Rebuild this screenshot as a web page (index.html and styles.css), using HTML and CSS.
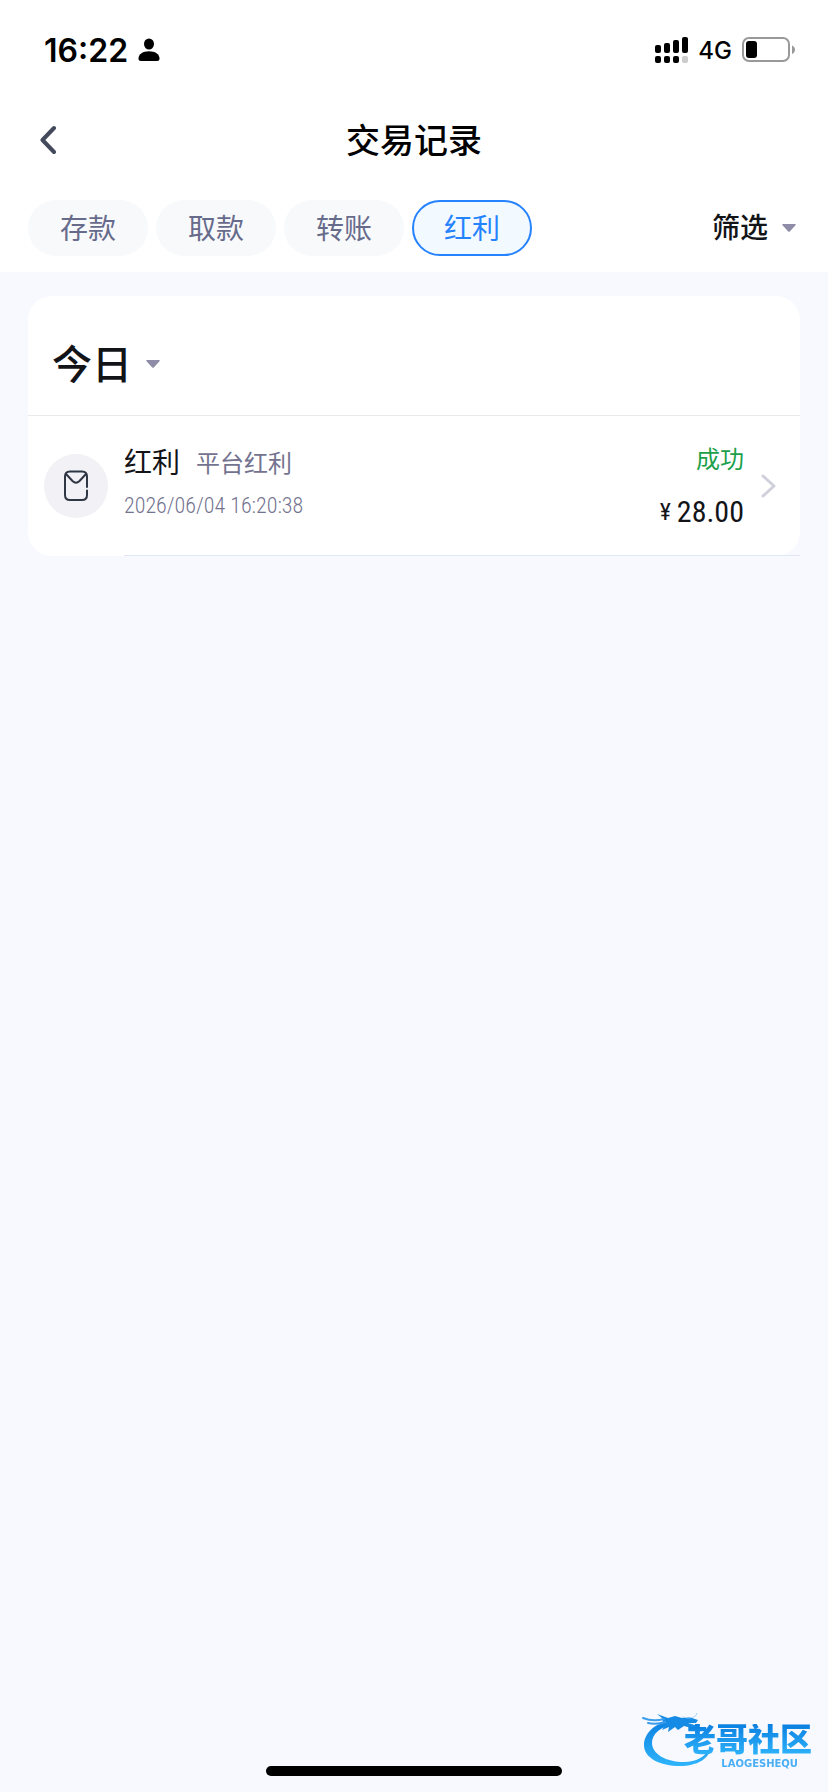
FILE: index.html
```html
<!DOCTYPE html>
<html lang="zh-CN">
<head>
    <meta charset="UTF-8">
    <meta name="viewport" content="width=device-width, initial-scale=1.0">
    <title>交易记录</title>
    <link rel="stylesheet" href="styles.css">
</head>
<body>
    <header class="top">
        <!-- Status bar -->
        <div class="status-bar">
            <div class="status-left">
                <span class="clock">16:22</span>
                <svg class="person" width="22" height="24" viewBox="0 0 22 24">
                    <ellipse cx="11" cy="6" rx="5" ry="5.5"/>
                    <path d="M0.5 20.5C0.5 16 5 13.2 11 13.2S21.5 16 21.5 20.5C21.5 22.2 20.7 23 19 23H3C1.3 23 .5 22.2 .5 20.5Z"/>
                </svg>
            </div>
            <div class="status-right">
                <svg width="33" height="28" viewBox="0 0 33 28">
                    <rect x="0" y="9" width="6" height="8" rx="2"/>
                    <rect x="9" y="7" width="6" height="10" rx="2"/>
                    <rect x="18" y="4" width="6" height="13" rx="2"/>
                    <rect x="27" y="1" width="6" height="16" rx="2"/>
                    <rect x="0" y="20" width="6" height="7" rx="2"/>
                    <rect x="9" y="20" width="6" height="7" rx="2"/>
                    <rect x="18" y="20" width="6" height="7" rx="2"/>
                    <rect x="27" y="20" width="6" height="7" rx="2" fill="#ccc"/>
                </svg>
                <span class="network">4G</span>
                <svg width="54" height="26" viewBox="0 0 54 26">
                    <rect x="1" y="1" width="46" height="23" rx="6" fill="none" stroke="#999" stroke-width="2"/>
                    <rect x="4" y="4" width="11" height="17" rx="3"/>
                    <path d="M50 8.500C54 10 54 15.500 50 17Z" fill="#999"/>
                </svg>
            </div>
        </div>

        <!-- Title bar -->
        <div class="title-bar">
            <button class="back" type="button" aria-label="返回">
                <svg width="18" height="30" viewBox="0 0 18 30">
                    <path d="M14 3L2.500 15L14 27" fill="none" stroke="#434a5c" stroke-width="4" stroke-linecap="round" stroke-linejoin="round"/>
                </svg>
            </button>
            <h1>交易记录</h1>
        </div>

        <!-- Record type tabs -->
        <nav class="tabs">
            <button class="tab" type="button">存款</button>
            <button class="tab" type="button">取款</button>
            <button class="tab" type="button">转账</button>
            <button class="tab active" type="button">红利</button>
            <button class="filter" type="button">
                <span class="label">筛选</span>
                <svg class="caret" width="14" height="8" viewBox="0 0 14 8"><path d="M1 0H13Q14.500 0 13.500 1.200L8 7.200Q7 8.400 6 7.200L.5 1.200Q-.5 0 1 0Z"/></svg>
            </button>
        </nav>
    </header>

    <main>
        <section class="card">
            <button class="day" type="button">
                <span class="label">今日</span>
                <svg class="caret" width="14" height="8" viewBox="0 0 14 8"><path d="M1 0H13Q14.500 0 13.500 1.200L8 7.200Q7 8.400 6 7.200L.5 1.200Q-.5 0 1 0Z"/></svg>
            </button>
            <a class="record" href="#">
                <span class="record-icon">
                    <svg width="26" height="32" viewBox="0 0 26 32" fill="none" stroke="#2f3644" stroke-width="2" stroke-linecap="round">
                        <path d="M24 17V6.500Q24 1.500 19 1.500H7Q2 1.500 2 6.500V25Q2 30 7 30H19Q24 30 24 25V20.500"/>
                        <path d="M3 4L9.500 11Q13 14.500 16.500 11L23 4"/>
                    </svg>
                </span>
                <span class="record-body">
                    <span class="record-text">
                        <span class="record-name">红利 <small>平台红利</small></span>
                        <time class="record-time">2026/06/04 16:20:38</time>
                    </span>
                    <span class="record-result">
                        <span class="record-status">成功</span>
                        <span class="record-amount"><small>¥</small> 28.00</span>
                    </span>
                    <svg class="arrow" width="16" height="24" viewBox="0 0 16 24">
                        <path d="M3 2L14 12L3 22" fill="none" stroke="#d0d0dc" stroke-width="3" stroke-linecap="round" stroke-linejoin="round"/>
                    </svg>
                </span>
            </a>
        </section>
    </main>

    <!-- Community badge -->
    <div class="badge">
        <svg class="dragon" width="72" height="60" viewBox="0 0 72 60">
            <defs>
                <linearGradient id="blue" x1="0" y1="0" x2="0" y2="1">
                    <stop offset="0" stop-color="#0b7fe0"/>
                    <stop offset="1" stop-color="#2fb4fb"/>
                </linearGradient>
            </defs>
            <path fill="url(#blue)" d="M30 12C12 15 2 26 2 37C2 50 18 58 38 58C56 58 68 50 69 39C63 49 54 54 42 54C24 54 10 46 10 35C10 26 18 19 32 16Z"/>
            <path fill="#168be6" d="M20 10L15 6L26 10L33 8L40 10L47 9L56 12L54 15L46 15L56 18L53 21L42 18L36 22L33 19L26 24L27 19L20 22L23 17L16 18L21 14Z"/>
            <path fill="none" stroke="#3a9deb" stroke-width="2" stroke-linecap="round" d="M1 10Q11 14 22 11M6 15Q14 17 23 14"/>
            <path fill="none" stroke="#a9d5f7" stroke-width="1" d="M40 9Q54 12 55 5"/>
        </svg>
        <div class="badge-text">
            <strong>老哥社区</strong>
            <span>LAOGESHEQU</span>
        </div>
    </div>

    <div class="home-indicator"></div>
</body>
</html>
```

FILE: styles.css
```css
* {
    box-sizing: border-box;
}
body {
    font-family: "Liberation Sans", "Noto Sans CJK SC", sans-serif;
    background-color: #f8f9ff;
    margin: 0;
    color: #131418;
    min-height: 100vh;
}
button {
    font-family: inherit;
    border: none;
    background: none;
    padding: 0;
    color: inherit;
    cursor: pointer;
}
svg {
    display: block;
    flex-shrink: 0;
}
.top {
    background-color: #fff;
    padding: 0 28px 16px;
}
.status-bar {
    display: flex;
    justify-content: space-between;
    align-items: center;
    height: 100px;
    padding: 0 4px 0 16px;
    color: #000;
    font-family: Inter, sans-serif;
}
.status-left {
    display: flex;
    align-items: center;
    gap: 10px;
}
.clock {
    font-size: 32px;
    font-weight: 600;
}
.status-right {
    display: flex;
    align-items: center;
    gap: 10px;
}
.network {
    font-size: 24px;
    font-weight: 500;
}
.title-bar {
    display: grid;
    grid-template-columns: 40px 1fr 40px;
    align-items: center;
    height: 80px;
}
.back {
    padding-left: 12px;
}
.title-bar h1 {
    margin: 0;
    padding-bottom: 4px;
    text-align: center;
    font-size: 34px;
    font-weight: 500;
    color: #000;
}
.tabs {
    display: flex;
    gap: 8px;
    padding-top: 20px;
}
.tab {
    width: 120px;
    height: 56px;
    padding-bottom: 2px;
    border-radius: 28px;
    background-color: #f8f9fb;
    color: #676b8b;
    font-size: 28px;
}
.tab.active {
    border: 2px solid #2683ff;
    background-color: #f2f9ff;
    color: #2683ff;
}
.filter {
    display: flex;
    align-items: center;
    gap: 14px;
    margin-left: auto;
    padding-right: 4px;
    font-size: 28px;
    font-weight: 500;
}
.label {
    padding-bottom: 4px;
}
.caret {
    fill: #8e8ca7;
}
main {
    padding: 24px 28px;
}
.card {
    background-color: #fff;
    border-radius: 24px;
}
.day {
    display: flex;
    align-items: center;
    gap: 14px;
    width: 100%;
    height: 120px;
    padding: 16px 24px 0;
    border-bottom: 1px solid #e8e9eb;
    font-size: 40px;
    font-weight: 500;
}
.record {
    display: flex;
    align-items: center;
    gap: 16px;
    padding-left: 16px;
    color: inherit;
    text-decoration: none;
}
.record-icon {
    display: grid;
    place-items: center;
    width: 64px;
    height: 64px;
    border-radius: 50%;
    background-color: #f1f1f6;
}
.record-body {
    flex: 1;
    display: flex;
    align-items: center;
    gap: 16px;
    height: 140px;
    padding-right: 24px;
    border-bottom: 1px solid #e2e7f5;
}
.record-text {
    flex: 1;
    display: flex;
    flex-direction: column;
    gap: 6px;
    padding-bottom: 6px;
}
.record-name {
    display: flex;
    align-items: center;
    gap: 16px;
    font-size: 28px;
    line-height: 40px;
}
.record-name small {
    font-size: 24px;
    color: #73738f;
}
.record-time {
    font-family: "Roboto Condensed", "Liberation Sans Narrow", Roboto, sans-serif;
    font-size: 22px;
    font-weight: 300;
    line-height: 32px;
    color: #73738f;
}
.record-result {
    display: flex;
    flex-direction: column;
    align-items: flex-end;
    gap: 12px;
}
.record-status {
    font-size: 24px;
    line-height: 40px;
    color: #1ca04c;
}
.record-amount {
    display: flex;
    align-items: center;
    gap: 6px;
    font-family: "Roboto Condensed", "Liberation Sans Narrow", Roboto, sans-serif;
    font-size: 30px;
    line-height: 40px;
}
.record-amount small {
    font-size: 24px;
}
.badge {
    position: fixed;
    right: 16px;
    bottom: 24px;
    display: flex;
    align-items: flex-end;
}
.dragon {
    margin-right: -30px;
}
.badge-text {
    display: flex;
    flex-direction: column;
    align-items: flex-end;
    gap: 4px;
}
.badge-text strong {
    font-size: 32px;
    line-height: 32px;
    font-weight: 900;
    color: transparent;
    background: linear-gradient(#0b7fe0, #2fb4fb);
    background-clip: text;
    -webkit-background-clip: text;
}
.badge-text span {
    margin-right: 14px;
    font-family: "DejaVu Sans", sans-serif;
    font-size: 10px;
    font-weight: 700;
    line-height: 8px;
    color: #4aaef5;
}
.home-indicator {
    position: fixed;
    bottom: 16px;
    left: 50%;
    width: 296px;
    height: 10px;
    margin-left: -148px;
    border-radius: 5px;
    background-color: #000;
}
```
